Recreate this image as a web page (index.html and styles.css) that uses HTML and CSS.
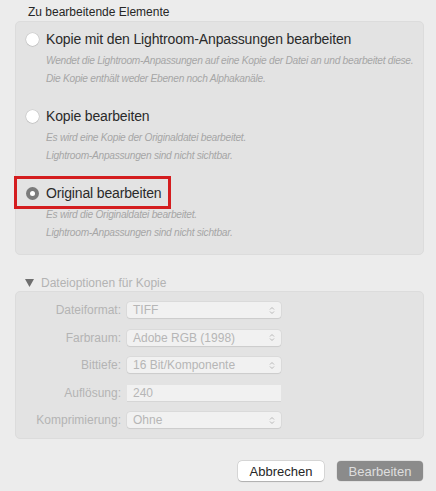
FILE: index.html
```html
<!DOCTYPE html>
<html lang="de">
<head>
    <meta charset="UTF-8">
    <title>Foto bearbeiten</title>
    <link rel="stylesheet" href="styles.css">
</head>
<body>
<div class="dialog">
    <div class="group-title">Zu bearbeitende Elemente</div>
    <div class="panel options">
        <div class="option">
            <div class="option-row"><span class="radio"></span><span class="option-label">Kopie mit den Lightroom-Anpassungen bearbeiten</span></div>
            <div class="option-desc">Wendet die Lightroom-Anpassungen auf eine Kopie der Datei an und bearbeitet diese.<br>Die Kopie enthält weder Ebenen noch Alphakanäle.</div>
        </div>
        <div class="option">
            <div class="option-row"><span class="radio"></span><span class="option-label">Kopie bearbeiten</span></div>
            <div class="option-desc">Es wird eine Kopie der Originaldatei bearbeitet.<br>Lightroom-Anpassungen sind nicht sichtbar.</div>
        </div>
        <div class="option">
            <div class="option-row marked"><span class="radio checked"></span><span class="option-label">Original bearbeiten</span></div>
            <div class="option-desc">Es wird die Originaldatei bearbeitet.<br>Lightroom-Anpassungen sind nicht sichtbar.</div>
        </div>
    </div>

    <div class="group-title disclosure"><svg class="tri" width="9" height="8" viewBox="0 0 9 8"><path d="M0 0H9L4.5 8Z" fill="#6f6f6f"/></svg>Dateioptionen für Kopie</div>
    <div class="panel fileopts">
        <label>Dateiformat:</label>
        <div class="popup">TIFF<svg class="chev" width="6" height="9" viewBox="0 0 6 9"><path d="M1 3.5 3 1.5 5 3.5M1 5.5 3 7.5 5 5.5" fill="none" stroke="#b8b8b8" stroke-width="1"/></svg></div>
        <label>Farbraum:</label>
        <div class="popup">Adobe RGB (1998)<svg class="chev" width="6" height="9" viewBox="0 0 6 9"><path d="M1 3.5 3 1.5 5 3.5M1 5.5 3 7.5 5 5.5" fill="none" stroke="#b8b8b8" stroke-width="1"/></svg></div>
        <label>Bittiefe:</label>
        <div class="popup">16 Bit/Komponente<svg class="chev" width="6" height="9" viewBox="0 0 6 9"><path d="M1 3.5 3 1.5 5 3.5M1 5.5 3 7.5 5 5.5" fill="none" stroke="#b8b8b8" stroke-width="1"/></svg></div>
        <label>Auflösung:</label>
        <div class="field">240</div>
        <label>Komprimierung:</label>
        <div class="popup">Ohne<svg class="chev" width="6" height="9" viewBox="0 0 6 9"><path d="M1 3.5 3 1.5 5 3.5M1 5.5 3 7.5 5 5.5" fill="none" stroke="#b8b8b8" stroke-width="1"/></svg></div>
    </div>

    <div class="buttons">
        <button class="btn">Abbrechen</button>
        <button class="btn default">Bearbeiten</button>
    </div>
</div>
</body>
</html>
```
FILE: styles.css
```css
html,body{margin:0;padding:0;}
body{background:#ececec;font-family:"Liberation Sans",Arial,sans-serif;color:#262626;width:436px;height:491px;overflow:hidden;}
.dialog{padding:5px 12px 0 15px;}
.group-title{font-size:12px;line-height:15px;color:#262626;padding-left:13px;height:16px;}
.panel{background:#e3e3e3;border:1px solid #dcdcdc;border-radius:5px;box-sizing:border-box;}

.options{padding:7px 0 13px 10px;display:flex;flex-direction:column;gap:19px;}
.option-row{position:relative;display:flex;align-items:center;gap:7px;height:20px;}
.radio{width:13px;height:13px;border-radius:50%;background:#fff;box-shadow:0 0 0 0.5px rgba(0,0,0,0.12),0 0.5px 1px rgba(0,0,0,0.15);box-sizing:border-box;flex:none;}
.radio.checked{background:#7b7b7b;position:relative;box-shadow:none;}
.radio.checked::after{content:"";position:absolute;left:4px;top:4px;width:5px;height:5px;border-radius:50%;background:#fff;}
.option-label{font-size:14px;line-height:20px;color:#2a2a2a;letter-spacing:-0.15px;}
.option-desc{margin:3px 0 0 20px;font-size:10.2px;line-height:17.5px;font-style:italic;color:#a6a6a6;letter-spacing:-0.27px;white-space:nowrap;}
.marked::before{content:"";position:absolute;left:-12px;top:-7px;width:157px;height:33px;border:3px solid #d41d1f;box-sizing:border-box;}

.disclosure{margin-top:20px;padding-left:10px;color:#b3b3b3;height:16px;display:flex;align-items:center;}
.tri{margin-right:7px;flex:none;}
.fileopts{display:grid;grid-template-columns:105px 154px;column-gap:6px;row-gap:11.5px;padding:10px 0 10px 0;}
.fileopts label{font-size:12px;line-height:16px;text-align:right;color:#b4b4b4;}
.popup,.field{position:relative;height:16px;box-sizing:border-box;background:#f1f1f1;border-radius:3px;font-size:12px;line-height:16px;color:#b6b6b6;padding-left:6px;box-shadow:0 0 0 0.5px rgba(0,0,0,0.06),0 0.5px 1px rgba(0,0,0,0.08);}
.field{border-radius:0;box-shadow:0 1px 0 #d6d6d6;}
.chev{position:absolute;right:6px;top:3.5px;}

.buttons{display:flex;justify-content:flex-end;gap:13px;margin-top:22px;padding-right:1px;}
.btn{width:86px;height:20px;border:0;border-radius:4px;background:#fff;font-family:inherit;font-size:13px;color:#262626;padding:0;box-shadow:0 0 0 0.5px rgba(0,0,0,0.15),0 0.5px 1px rgba(0,0,0,0.2);}
.btn.default{background:#8b8b8b;color:#dedede;box-shadow:0 0 0 0.5px rgba(0,0,0,0.1);}
```
